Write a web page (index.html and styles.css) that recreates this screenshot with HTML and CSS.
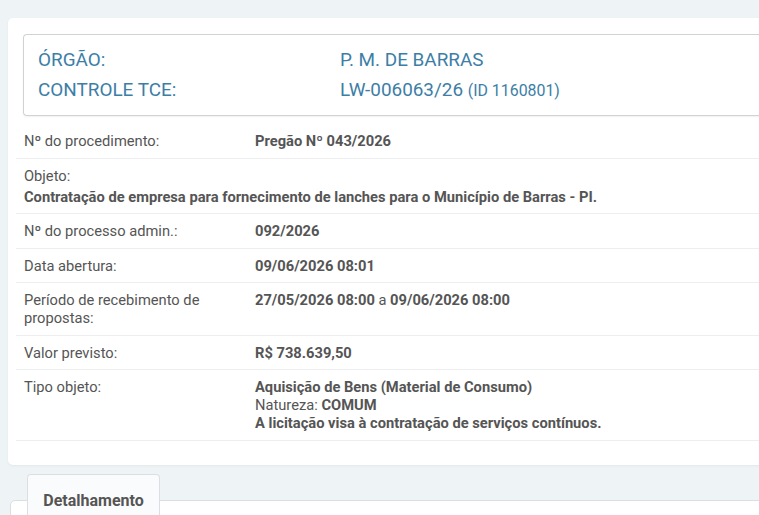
FILE: index.html
```html
<!DOCTYPE html>
<html lang="pt-BR">
<head>
    <meta charset="UTF-8">
    <meta name="viewport" content="width=device-width, initial-scale=1.0">
    <title>Licitação - Pregão Nº 043/2026</title>
    <link rel="stylesheet" href="styles.css">
</head>
<body>
    <div class="card">
        <div class="header-box">
            <div class="header-line">
                <span class="header-label">ÓRGÃO:</span>
                <span>P. M. DE BARRAS</span>
            </div>
            <div class="header-line">
                <span class="header-label">CONTROLE TCE:</span>
                <span>LW-006063/26 <small>(ID 1160801)</small></span>
            </div>
        </div>

        <div class="info">
            <div class="row">
                <div class="label">Nº do procedimento:</div>
                <div class="value"><b>Pregão Nº 043/2026</b></div>
            </div>
            <div class="row row-block">
                <div class="label">Objeto:</div>
                <div class="value"><b>Contratação de empresa para fornecimento de lanches para o Município de Barras - PI.</b></div>
            </div>
            <div class="row">
                <div class="label">Nº do processo admin.:</div>
                <div class="value"><b>092/2026</b></div>
            </div>
            <div class="row">
                <div class="label">Data abertura:</div>
                <div class="value"><b>09/06/2026 08:01</b></div>
            </div>
            <div class="row">
                <div class="label">Período de recebimento de propostas:</div>
                <div class="value"><b>27/05/2026 08:00</b> a <b>09/06/2026 08:00</b></div>
            </div>
            <div class="row">
                <div class="label">Valor previsto:</div>
                <div class="value"><b>R$ 738.639,50</b></div>
            </div>
            <div class="row">
                <div class="label">Tipo objeto:</div>
                <div class="value">
                    <b>Aquisição de Bens (Material de Consumo)</b><br>
                    Natureza: <b>COMUM</b><br>
                    <b>A licitação visa à contratação de serviços contínuos.</b>
                </div>
            </div>
        </div>
    </div>

    <div class="tabs">
        <div class="tab">Detalhamento</div>
    </div>
    <div class="panel"></div>
</body>
</html>
```

FILE: styles.css
```css
body {
    margin: 0;
    background-color: #eef3f6;
    font-family: Roboto, "Liberation Sans", Arial, sans-serif;
    color: #555;
    overflow: hidden;
}
.card {
    margin: 18px -20px 0 8px;
    padding: 16px 0 24px 8px;
    background: #fff;
    border-radius: 5px;
    box-shadow: 0 1px 3px rgba(0, 0, 0, 0.05);
}
.header-box {
    margin-left: 7px;
    padding: 10px 14px 9px;
    border: 1px solid #cfd3d6;
    border-right: none;
    border-radius: 4px 0 0 4px;
    box-shadow: 0 1px 2px rgba(0, 0, 0, 0.06);
    color: #3d7ea6;
    font-size: 18.9px;
    line-height: 30px;
}
.header-line {
    display: flex;
}
.header-label {
    width: 302px;
}
.header-box small {
    font-size: 15.9px;
}
.info {
    margin-top: 8px;
    font-size: 14.7px;
    line-height: 18px;
}
.row {
    display: flex;
    padding: 8px 8px 7.5px;
    border-bottom: 1px solid #eceef0;
}
.row .label {
    width: 215px;
    padding-right: 16px;
    flex-shrink: 0;
}
.row-block {
    display: block;
}
.row-block .label {
    width: auto;
    margin-bottom: 3px;
}
.tabs {
    position: relative;
    z-index: 1;
    display: flex;
    margin: 9px 0 0 27px;
}
.tab {
    width: 131px;
    padding: 16px 0 20px;
    background: #fafbfc;
    border: 1px solid #dcdfe2;
    border-bottom: none;
    border-radius: 4px 4px 0 0;
    text-align: center;
    font-size: 16px;
    font-weight: bold;
    line-height: 20px;
}
.panel {
    height: 60px;
    margin: -31px -20px 0 10px;
    background: #fff;
    border: 1px solid #dcdfe2;
    border-radius: 5px 0 0 0;
}
```
